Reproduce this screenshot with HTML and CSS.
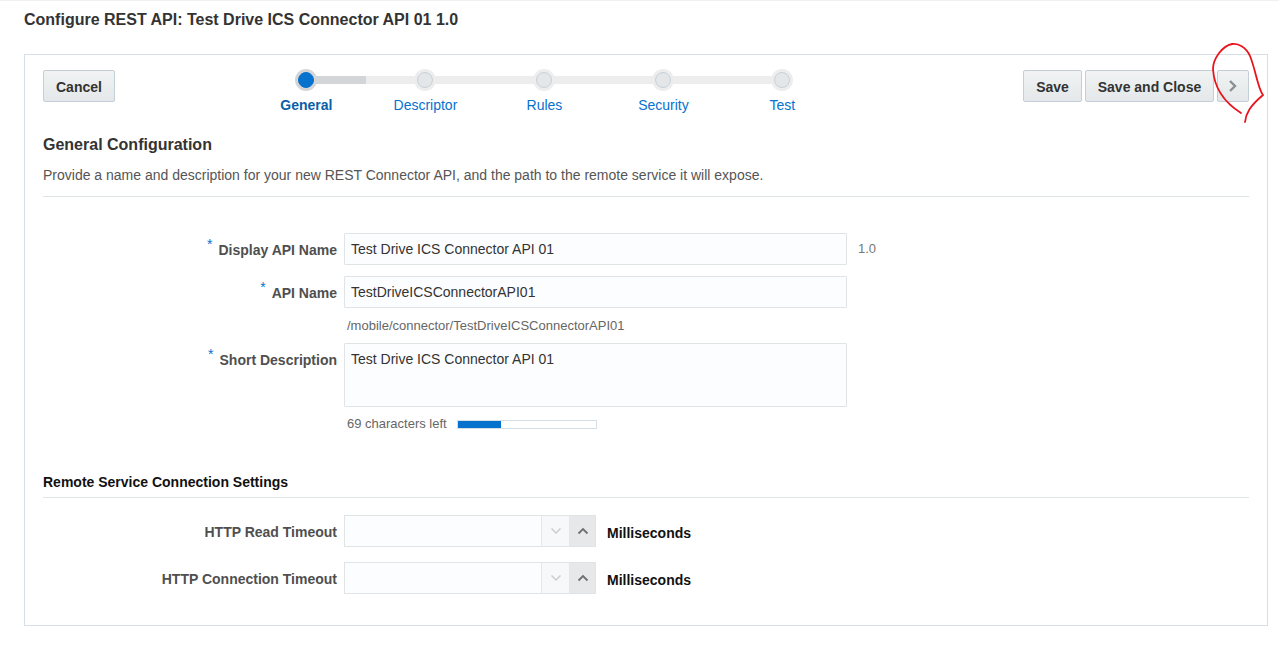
FILE: index.html
```html
<!DOCTYPE html>
<html>
<head>
<meta charset="utf-8">
<link rel="stylesheet" href="styles.css">
</head>
<body>
<div class="page">
  <h1 class="page-title">Configure REST API: Test Drive ICS Connector API 01 1.0</h1>
  <div class="panel">
    <div class="toolbar">
      <button class="btn">Cancel</button>
      <div class="train">
        <div class="train-line"><div class="train-done"></div></div>
        <div class="step active"><span class="dot"></span><span class="step-label">General</span></div>
        <div class="step"><span class="dot"></span><span class="step-label">Descriptor</span></div>
        <div class="step"><span class="dot"></span><span class="step-label">Rules</span></div>
        <div class="step"><span class="dot"></span><span class="step-label">Security</span></div>
        <div class="step"><span class="dot"></span><span class="step-label">Test</span></div>
      </div>
      <div class="toolbar-right">
        <button class="btn">Save</button>
        <button class="btn">Save and Close</button>
        <button class="btn btn-icon"><svg width="12" height="14" viewBox="0 0 12 14"><path d="M3 2 L8 7 L3 12" fill="none" stroke="#8a8f94" stroke-width="2.4"/></svg></button>
      </div>
    </div>

    <h2 class="section-title">General Configuration</h2>
    <p class="section-desc">Provide a name and description for your new REST Connector API, and the path to the remote service it will expose.</p>

    <div class="form">
      <div class="row">
        <label class="label"><span class="req">*</span>Display API Name</label>
        <div class="field"><div class="input">Test Drive ICS Connector API 01</div></div>
        <span class="version">1.0</span>
      </div>
      <div class="row">
        <label class="label"><span class="req">*</span>API Name</label>
        <div class="field"><div class="input">TestDriveICSConnectorAPI01</div></div>
      </div>
      <div class="row help-row">
        <span class="label"></span>
        <span class="help">/mobile/connector/TestDriveICSConnectorAPI01</span>
      </div>
      <div class="row row-top">
        <label class="label label-top"><span class="req">*</span>Short Description</label>
        <div class="field"><div class="input textarea">Test Drive ICS Connector API 01</div></div>
      </div>
      <div class="row counter-row">
        <span class="label"></span>
        <span class="counter">69 characters left</span>
        <span class="meter"><span class="meter-fill" style="width:43px"></span></span>
      </div>
    </div>

    <h3 class="sub-title">Remote Service Connection Settings</h3>
    <div class="form form2">
      <div class="row">
        <label class="label">HTTP Read Timeout</label>
        <div class="spin">
          <div class="spin-input"></div>
          <span class="spin-btn down"><svg width="12" height="8" viewBox="0 0 12 8"><path d="M1.5 1.5 L6 6 L10.5 1.5" fill="none" stroke="#c9ced2" stroke-width="1.5"/></svg></span>
          <span class="spin-btn up"><svg width="12" height="8" viewBox="0 0 12 8"><path d="M1.5 6.5 L6 2 L10.5 6.5" fill="none" stroke="#6b7176" stroke-width="1.8"/></svg></span>
        </div>
        <span class="unit">Milliseconds</span>
      </div>
      <div class="row">
        <label class="label">HTTP Connection Timeout</label>
        <div class="spin">
          <div class="spin-input"></div>
          <span class="spin-btn down"><svg width="12" height="8" viewBox="0 0 12 8"><path d="M1.5 1.5 L6 6 L10.5 1.5" fill="none" stroke="#c9ced2" stroke-width="1.5"/></svg></span>
          <span class="spin-btn up"><svg width="12" height="8" viewBox="0 0 12 8"><path d="M1.5 6.5 L6 2 L10.5 6.5" fill="none" stroke="#6b7176" stroke-width="1.8"/></svg></span>
        </div>
        <span class="unit">Milliseconds</span>
      </div>
    </div>
  </div>
</div>
<svg class="annotation" width="1279" height="645" viewBox="0 0 1279 645"><path d="M1245 121 C1246 112 1250 105 1263 94 C1258 88 1256 70 1250 55 C1246 46 1238 42 1232 43 C1222 45 1213 58 1213 68 C1214 85 1222 100 1241 112" fill="none" stroke="#e8141c" stroke-width="1.8" stroke-linecap="round"/></svg>
</body>
</html>
```

FILE: styles.css
```css
* { box-sizing: border-box; }
html, body { margin: 0; padding: 0; background: #fff; }
body {
  font-family: "Liberation Sans", Arial, sans-serif;
  color: #333;
  border-top: 1px solid #f0f0f0;
  position: relative;
  height: 645px;
  overflow: hidden;
}
.page { padding: 0 11px 0 24px; }
.page-title {
  margin: 0;
  padding-top: 9px;
  font-size: 16px;
  line-height: 19px;
  font-weight: bold;
  color: #333;
  height: 53px;
}
.panel {
  width: 1244px;
  height: 572px;
  border: 1px solid #d6dfe6;
  padding: 15px 18px 0 18px;
}
.toolbar {
  display: flex;
  align-items: flex-start;
  height: 32px;
}
.btn {
  height: 32px;
  padding: 0 12px;
  font-family: "Liberation Sans", Arial, sans-serif;
  font-size: 14px;
  font-weight: bold;
  color: #333;
  background: linear-gradient(#f1f3f3, #e4e8ea);
  border: 1px solid #c4ced7;
  border-radius: 2px;
  padding-top: 1px;
}
.btn-icon { width: 32px; padding: 0; display: flex; align-items: center; justify-content: center; }
.toolbar-right { margin-left: auto; display: flex; gap: 3px; }
.toolbar-right .btn:first-child { width: 59px; padding-left: 0; padding-right: 0; }
.toolbar-right .btn:nth-child(2) { width: 129px; padding-left: 0; padding-right: 0; }

.train {
  position: relative;
  margin-left: 132px;
  margin-top: -1px;
  display: grid;
  grid-template-columns: repeat(5, 119px);
}
.train-line {
  position: absolute;
  left: 59px;
  right: 59px;
  top: 7px;
  height: 8px;
  background: #ededed;
}
.train-done { width: 60px; height: 8px; background: #d3d5d7; }
.step {
  position: relative;
  display: flex;
  flex-direction: column;
  align-items: center;
}
.dot {
  width: 22px;
  height: 22px;
  border-radius: 50%;
  background: #ededed;
  display: flex;
  align-items: center;
  justify-content: center;
}
.dot::after {
  content: "";
  width: 16px;
  height: 16px;
  border-radius: 50%;
  background: #e3e7ea;
  border: 1px solid #c9d1d8;
  box-sizing: border-box;
}
.step.active .dot { background: #d3d5d7; }
.step.active .dot::after { background: #0572ce; border-color: #0572ce; }
.step-label {
  margin-top: 5px;
  font-size: 14px;
  line-height: 18px;
  color: #0572ce;
}
.step.active .step-label { font-weight: bold; color: #0a5fa6; }

.section-title {
  margin: 33px 0 0 0;
  font-size: 16px;
  line-height: 20px;
  font-weight: bold;
  color: #333;
}
.section-desc {
  margin: 10px 0 0 0;
  font-size: 14px;
  line-height: 20px;
  color: #555;
  padding-bottom: 11px;
  border-bottom: 1px solid #dfe4e7;
}

.form { margin-top: 36px; }
.row { display: flex; align-items: center; margin-bottom: 11px; }
.row-top { align-items: flex-start; }
.label {
  width: 294px;
  flex: none;
  text-align: right;
  margin-right: 7px;
  font-size: 14px;
  font-weight: bold;
  color: #4f4f4f;
  padding-top: 2px;
}
.label-top { padding-top: 9px; }
.req {
  color: #0572ce;
  font-size: 14px;
  position: relative;
  top: -6px;
  margin-right: 6px;
  font-weight: normal;
}
.field { width: 503px; }
.input {
  height: 32px;
  border: 1px solid #dfe4e7;
  background: #fcfdfe;
  border-radius: 1px;
  padding: 0 6px;
  font-size: 14px;
  line-height: 30px;
  color: #333;
}
.textarea { height: 64px; line-height: 18px; padding-top: 6px; }
.version { margin-left: 11px; font-size: 13px; color: #777; margin-top: -2px; }
.help-row { margin-top: -1px; margin-bottom: 9px; }
.help { font-size: 13px; color: #666; padding-left: 3px; line-height: 16px; }
.counter-row { margin-top: -2px; }
.counter { font-size: 13px; color: #666; padding-left: 3px; line-height: 16px; }
.meter {
  display: inline-block;
  width: 140px;
  height: 9px;
  margin-left: 10px;
  border: 1px solid #d6dfe6;
  background: #fff;
}
.meter-fill { display: block; height: 7px; background: #0572ce; }

.sub-title {
  margin: 41px 0 0 0;
  font-size: 14px;
  line-height: 18px;
  font-weight: bold;
  color: #111;
  padding-bottom: 6px;
  border-bottom: 1px solid #dfe4e7;
}
.form2 { margin-top: 17px; }
.form2 .row { margin-bottom: 15px; }
.spin {
  display: flex;
  width: 252px;
  height: 32px;
  border: 1px solid #dfe4e7;
  background: #fcfdfe;
}
.spin-input { flex: 1; }
.spin-btn {
  width: 28px;
  display: flex;
  align-items: center;
  justify-content: center;
  border-left: 1px solid #e4e8ea;
}
.spin-btn.down { background: #f7f8f9; }
.spin-btn.up { background: #e6e8ea; width: 26px; }
.unit { margin-left: 11px; font-size: 14px; font-weight: bold; color: #111; margin-top: 3px; }

.annotation { position: absolute; left: 0; top: 0; pointer-events: none; }
```
